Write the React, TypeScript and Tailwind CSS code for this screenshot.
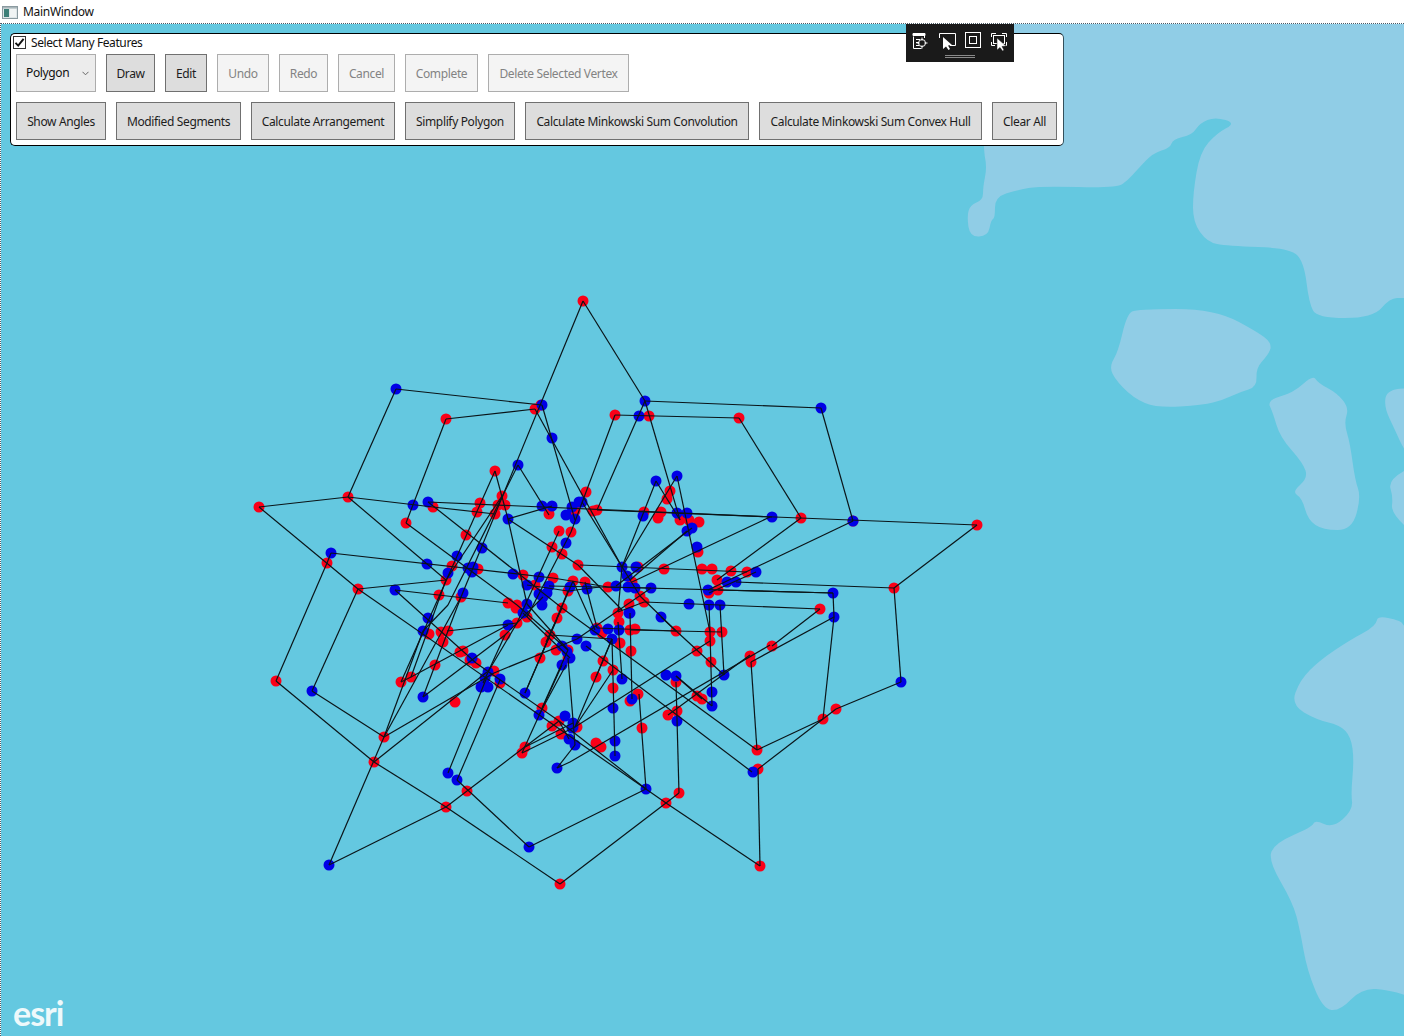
import React from "react";

type P = [number, number];

function smooth(pts: P[]): string {
  const n = pts.length;
  const mid = (a: P, b: P): P => [(a[0] + b[0]) / 2, (a[1] + b[1]) / 2];
  const s = mid(pts[n - 1], pts[0]);
  let d = `M${s[0]} ${s[1]}`;
  for (let i = 0; i < n; i++) {
    const m = mid(pts[i], pts[(i + 1) % n]);
    d += ` Q${pts[i][0]} ${pts[i][1]} ${m[0]} ${m[1]}`;
  }
  return d + "Z";
}

const land: P[][] = [
  [[975,-100],[1700,-100],[1700,298],[1404,298],[1390,298],[1373,318],[1317,318],[1309,303],[1304,262],[1290,248],[1227,246],[1207,242],[1193,222],[1193,193],[1200,152],[1217,133],[1236,123],[1215,117],[1200,123],[1192,135],[1173,139],[1170,148],[1153,153],[1137,170],[1128,180],[1117,188],[1040,186],[1017,190],[995,197],[995,218],[991,220],[988,236],[970,237],[967,217],[970,205],[983,200],[983,187],[987,167],[983,148]],
  [[1127,314],[1137,309],[1215,309],[1263,335],[1272,345],[1268,355],[1256,368],[1257,387],[1240,392],[1223,400],[1203,405],[1157,408],[1133,398],[1113,377],[1110,365],[1118,352]],
  [[1267,400],[1293,393],[1313,375],[1318,383],[1337,393],[1349,408],[1344,423],[1350,443],[1355,480],[1361,497],[1352,530],[1323,530],[1308,520],[1302,498],[1292,492],[1308,478],[1303,463],[1280,437],[1273,413]],
  [[1387,389],[1420,388],[1420,470],[1404,450],[1395,430],[1384,407]],
  [[1420,462],[1388,480],[1393,497],[1391,513],[1420,540]],
  [[1378,614],[1376,626],[1350,640],[1320,660],[1300,680],[1291,705],[1317,720],[1340,725],[1351,737],[1354,760],[1351,793],[1353,810],[1333,828],[1315,820],[1312,827],[1275,843],[1268,860],[1293,903],[1300,930],[1307,970],[1323,1009],[1340,1011],[1362,988],[1390,990],[1420,1000],[1420,628]],
];

const edges: number[][] = [
  [583,301,645,401],[583,301,461,597],[461,597,384,737],[396,389,542,405],[396,389,348,497],[446,419,535,409],[446,419,406,523],
  [645,401,821,408],[821,408,853,521],[645,401,597,510],[615,415,739,418],[615,415,571,532],[645,401,680,520],[739,418,801,518],
  [535,409,622,567],[518,465,549,515],[542,405,575,520],[495,471,508,519],
  [259,507,348,497],[348,497,433,507],[433,507,495,514],[259,507,358,589],[327,563,276,681],[276,681,374,762],[331,553,327,563],[331,553,553,578],
  [348,497,446,580],[358,589,446,580],[358,589,312,691],[312,691,384,737],[395,590,508,603],[395,590,476,663],[476,663,559,721],[559,721,646,789],
  [384,737,494,673],[374,762,487,672],[358,589,666,803],[406,523,517,605],[517,605,568,650],[428,502,562,608],[562,608,757,750],
  [423,697,505,635],[447,631,517,623],[401,682,411,677],[411,677,508,625],[495,471,401,682],[518,465,448,605],[448,605,423,631],[423,631,384,737],[502,496,446,580],[446,580,411,677],[461,597,448,631],[448,631,423,697],
  [428,502,772,517],[597,510,977,525],[508,519,552,506],[508,519,578,565],[508,519,527,604],[578,565,622,610],
  [580,565,747,572],[553,578,608,587],[608,587,833,593],[736,582,894,588],[718,590,833,593],[644,602,820,609],[527,585,568,591],[568,591,600,587],[549,586,651,588],
  [582,502,640,596],[656,481,622,567],[656,481,680,520],[677,476,622,567],[677,476,710,632],[622,567,618,612],[770,517,632,582],[692,528,616,586],[687,531,630,580],[853,521,708,590],[801,518,717,580],[756,572,709,593],
  [709,605,710,632],[710,632,712,706],[720,605,724,675],[630,630,722,632],[661,617,724,675],[710,641,575,727],[770,645,570,762],[570,762,557,768],[750,655,668,715],[751,662,757,750],[758,769,760,866],[639,694,646,789],[612,639,615,756],[630,613,632,699],[618,622,622,679],[586,646,752,772],[676,676,712,706],[676,682,679,793],
  [457,780,529,847],[529,847,646,789],[560,884,446,807],[560,884,666,803],[666,803,760,866],[666,803,679,793],[446,807,374,762],[446,807,559,721],[329,865,446,807],[329,865,384,737],
  [487,677,448,773],[500,680,457,780],[494,673,577,639],[557,619,525,693],[550,635,525,693],[562,665,522,753],[568,658,575,745],[522,753,575,727],[525,747,573,723],[542,708,568,650],[539,715,566,665],[612,639,575,727],[613,670,575,727],
  [758,769,836,709],[757,750,823,719],[823,719,834,617],[836,709,901,682],[901,682,894,588],[894,588,977,525],[751,662,834,617],[772,646,820,609],[833,593,834,617],
  [505,635,483,683],[517,623,488,672],[559,531,517,623],[571,532,527,617],[562,608,546,642],[557,618,540,658],[543,597,505,635],[573,581,557,618],[568,591,557,618],[585,582,597,628],[573,581,595,630],[550,635,612,639],[523,613,570,658],[527,604,568,650],
  [618,612,644,602],[577,639,651,588],[597,628,676,631],[596,677,612,639],[640,596,676,631],[676,676,702,699],[559,721,569,739],[575,745,557,768],
];

const red: P[] = [
  [583,301],[535,409],[541,405],[446,419],[615,415],[649,416],[739,418],[259,507],[348,497],[977,525],[853,521],[801,518],[327,563],[358,589],[894,588],[276,681],[384,737],[374,762],[446,807],[467,791],[560,884],[666,803],[679,793],[760,866],[757,750],[758,769],[823,719],[836,709],[772,646],[750,656],[751,662],[820,609],
  [495,471],[502,496],[498,505],[505,505],[495,514],[480,503],[477,512],[433,507],[406,523],[466,535],[452,566],[446,580],[478,569],[439,595],[461,597],[523,575],[553,578],[535,585],[573,581],[568,591],[508,603],[517,605],[516,608],[562,608],[557,618],[549,514],[559,531],[571,532],[552,547],[562,554],[578,565],
  [586,492],[670,491],[667,499],[644,512],[661,512],[658,518],[680,520],[689,520],[699,522],[597,510],[593,511],[575,511],[664,569],[702,569],[712,569],[731,571],[747,572],[717,580],[718,590],[709,593],[698,552],[638,567],[632,582],[608,587],[585,582],[640,596],[644,602],[629,604],[618,613],
  [429,634],[441,632],[448,631],[443,642],[435,665],[411,677],[401,682],[460,652],[463,651],[470,660],[476,663],[455,702],[494,671],[500,683],[505,635],[517,623],[527,617],[550,635],[546,642],[556,650],[568,650],[568,658],[540,658],[542,708],[559,721],[552,726],[561,734],[577,727],[525,747],[522,753],
  [597,628],[602,633],[619,622],[630,630],[635,629],[620,643],[631,651],[676,631],[710,632],[722,632],[710,641],[697,651],[711,662],[603,661],[613,670],[596,677],[613,688],[676,682],[697,696],[702,699],[638,694],[630,701],[677,711],[668,715],[642,728],[596,743],[601,747],[575,727],
];

const blue: P[] = [
  [396,389],[542,405],[552,438],[645,401],[639,416],[821,408],[853,521],[772,517],[331,553],[395,590],[312,691],[329,865],[529,847],[646,789],[753,772],[901,682],[834,617],[833,593],
  [518,465],[413,505],[428,502],[508,519],[542,506],[552,506],[572,507],[566,515],[575,519],[579,502],[566,543],[482,548],[457,556],[427,564],[448,573],[468,568],[473,567],[472,572],[513,574],[539,577],[527,585],[549,586],[570,587],[539,594],[547,593],[543,597],[542,605],[527,604],[523,613],[428,618],[463,593],
  [656,481],[677,476],[582,502],[643,516],[677,513],[687,513],[687,531],[692,528],[697,547],[622,567],[636,567],[627,576],[616,586],[628,587],[635,588],[651,588],[756,572],[736,582],[727,582],[708,590],[689,604],[709,605],[720,605],[661,617],[629,613],[587,589],
  [423,631],[423,697],[472,658],[488,672],[485,678],[500,679],[481,687],[488,687],[508,625],[577,639],[562,646],[567,652],[570,658],[562,665],[525,693],[539,715],[565,716],[573,723],[572,728],[569,739],[575,745],[557,768],[448,773],[457,780],
  [595,630],[608,629],[619,630],[612,639],[586,646],[630,613],[622,679],[666,675],[676,676],[724,675],[712,692],[712,706],[613,708],[632,699],[677,721],[615,741],[615,756],[573,727],
];

function MapCanvas() {
  return (
    <svg className="absolute inset-0 h-full w-full" viewBox="1 24 1403 1012" preserveAspectRatio="none">
      <rect x="0" y="0" width="1404" height="1036" fill="#64c8e0" />
      {land.map((p, i) => <path key={i} d={smooth(p)} fill="#90cde6" />)}
      {red.map((p, i) => <circle key={i} cx={p[0]} cy={p[1]} r="5.5" fill="#fa0018" />)}
      {blue.map((p, i) => <circle key={i} cx={p[0]} cy={p[1]} r="5.5" fill="#0000e6" />)}
      {edges.map((e, i) => <line key={i} x1={e[0]} y1={e[1]} x2={e[2]} y2={e[3]} stroke="#0a1418" strokeWidth="1.2" />)}
    </svg>
  );
}

function Btn({ w, label, kind = "on" }: { w: string; label: string; kind?: "on" | "off" }) {
  const cls =
    kind === "on"
      ? "bg-[#dddddd] border-[#707070] text-[#1c1c1c]"
      : "bg-[#f4f4f4] border-[#adadad] text-[#838383]";
  return (
    <div className={`flex h-[38px] shrink-0 items-center justify-center border pt-[2px] ${cls} ${w}`}>
      <span className="whitespace-nowrap">{label}</span>
    </div>
  );
}

function Panel() {
  return (
    <div className="absolute left-[9px] top-[9px] flex h-[113px] w-[1054px] flex-col rounded-[5px] border border-black border-r-[#34505c] bg-white px-[5px] pt-[2px] text-[12px] leading-[16px] [font-family:'Noto_Sans',sans-serif]">
      <div className="-ml-[3px] flex h-[13px] items-center gap-[5px] text-[#111]">
        <div className="flex h-[13px] w-[13px] items-center justify-center border border-[#333] bg-white">
          <svg width="11" height="11" viewBox="0 0 11 11"><path d="M1.5 5.8 L4.2 8.6 L9.6 1.8" fill="none" stroke="#111" strokeWidth="1.9" /></svg>
        </div>
        <span className="tracking-[-0.4px]">Select Many Features</span>
      </div>
      <div className="mt-[5px] flex gap-[10px] tracking-[-0.36px]">
        <div className="flex h-[38px] w-[80px] shrink-0 items-center justify-between border border-[#acacac] bg-[#ececec] pl-[9px] pr-[6px] text-[#111]">
          <span>Polygon</span>
          <svg width="7" height="5" viewBox="0 0 7 5"><path d="M0.5 0.8 L3.5 3.8 L6.5 0.8" fill="none" stroke="#666" strokeWidth="1" /></svg>
        </div>
        <Btn w="w-[49px]" label="Draw" />
        <Btn w="w-[42px]" label="Edit" />
        <Btn w="w-[52px]" label="Undo" kind="off" />
        <Btn w="w-[49px]" label="Redo" kind="off" />
        <Btn w="w-[57px]" label="Cancel" kind="off" />
        <Btn w="w-[73px]" label="Complete" kind="off" />
        <Btn w="w-[141px]" label="Delete Selected Vertex" kind="off" />
      </div>
      <div className="mt-[10px] flex gap-[10px] tracking-[-0.36px]">
        <Btn w="w-[90px]" label="Show Angles" />
        <Btn w="w-[125px]" label="Modified Segments" />
        <Btn w="w-[144px]" label="Calculate Arrangement" />
        <Btn w="w-[110px]" label="Simplify Polygon" />
        <Btn w="w-[224px]" label="Calculate Minkowski Sum Convolution" />
        <Btn w="w-[223px]" label="Calculate Minkowski Sum Convex Hull" />
        <Btn w="w-[65px]" label="Clear All" />
      </div>
    </div>
  );
}

function Toolbar() {
  return (
    <div className="absolute left-[905px] top-0 flex h-[38px] w-[108px] flex-col items-center bg-[#1a1a1a]">
      <svg width="108" height="30" viewBox="0 0 108 30" className="shrink-0" fill="none" stroke="#fff" strokeWidth="1">
        {/* document + target */}
        <g transform="translate(-7 0)">
          <path d="M14.5 24.5 V12.5 M14.5 10 h11 M14.5 24.5 h8 M25.5 10 V14" />
          <path d="M14 9.5 h12 v2 h-12z" fill="#fff" />
          <path d="M17 15.5 h4 M17 18.5 h3 M17 21.5 h3" />
          <circle cx="23" cy="19" r="3.5" />
          <path d="M23 13.5 v3 M23 21.5 v3 M17.5 19 h3 M25.5 19 h3" />
        </g>
        {/* select by rectangle */}
        <path d="M33.5 14 V9.5 H49.5 V21.5 H44" />
        <path d="M37 13 L37 25 L40 22.5 L42.5 26 L44 25 L42 21.5 L46 21 Z" fill="#fff" stroke="none" />
        {/* square */}
        <rect x="59.5" y="8.5" width="15" height="15" />
        <rect x="63.5" y="12.5" width="7" height="7" />
        {/* corners with cursor */}
        <path d="M85.5 13 V9.5 H90 M96 9.5 H100.5 V13 M85.5 18 V21.5 H89 M100.5 18 V21.5 H98" />
        <rect x="87.5" y="11.5" width="11" height="8" />
        <path d="M91 14 L91 26 L94 23.5 L96.5 27 L98 26 L96 22.5 L100 22 Z" fill="#fff" stroke="#1a1a1a" strokeWidth="0.5" />
      </svg>
      <div className="mt-[1px] h-[3px] w-[30px] border-y border-[#8a8a8a]" />
    </div>
  );
}

export default function App() {
  return (
    <div className="flex h-[1036px] w-[1404px] flex-col overflow-hidden bg-white">
      <div className="flex h-[23px] shrink-0 items-center bg-white pl-[2px]">
        <svg width="16" height="16" viewBox="0 0 16 16" className="shrink-0">
          <rect x="0.5" y="2.5" width="15" height="12" fill="#dfe6e8" stroke="#8b9aa0" />
          <rect x="2" y="5" width="5" height="8" fill="#3d7f78" />
          <rect x="8" y="5" width="6" height="8" fill="#f1f4f4" />
          <rect x="1" y="3" width="14" height="1.5" fill="#a9b6ba" />
        </svg>
        <span className="ml-[5px] text-[12px] tracking-[-0.3px] text-[#111] [font-family:'Noto_Sans',sans-serif]">MainWindow</span>
      </div>
      <div className="relative min-h-0 flex-1 border-l border-t border-dotted border-[#4a5a66]">
        <MapCanvas />
        <Panel />
        <Toolbar />
        <div className="absolute bottom-[3px] left-[12px] text-[34px] font-bold leading-[40px] tracking-[-1px] text-[#eef9fb] [font-family:'Lato',sans-serif]">esri</div>
      </div>
    </div>
  );
}
